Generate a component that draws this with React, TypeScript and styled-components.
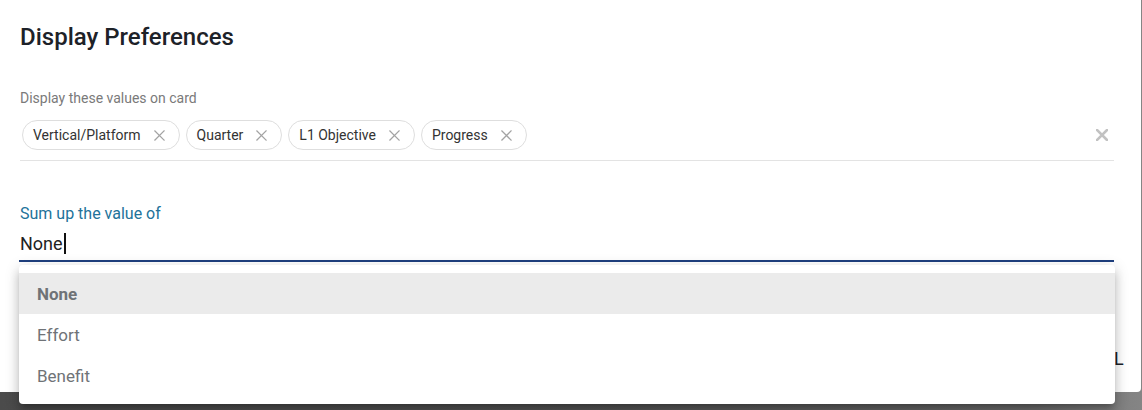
import React from 'react'
import styled, { createGlobalStyle } from 'styled-components'

const GlobalStyle = createGlobalStyle`
  html, body {
    margin: 0;
    padding: 0;
  }
  body {
    width: 1142px;
    height: 410px;
    overflow: hidden;
    background: linear-gradient(90deg, #4b4b4b 0%, #575757 55%, #6c6c6c 90%, #858585 100%);
    font-family: Roboto, "Noto Sans", "Liberation Sans", sans-serif;
  }
`

const Dialog = styled.div`
  position: relative;
  width: 1141px;
  height: 392px;
  background: #fff;
  border-bottom-right-radius: 4px;
  box-sizing: border-box;
  padding: 22px 20px 0 20px;
  display: flex;
  flex-direction: column;
`

const Title = styled.h2`
  margin: 0;
  font-size: 24px;
  font-weight: 500;
  line-height: 30px;
  color: #1d2228;
`

const Field = styled.div<{ $top: number }>`
  position: relative;
  margin-top: ${p => p.$top}px;
  margin-right: 7px;
`

const Label = styled.div<{ $focused?: boolean }>`
  font-size: ${p => (p.$focused ? 16 : 14)}px;
  line-height: ${p => (p.$focused ? 19 : 16)}px;
  color: ${p => (p.$focused ? '#22729a' : '#7a7a7a')};
`

const ChipRow = styled.div`
  display: flex;
  align-items: center;
  gap: 6px;
  padding: 14px 0 10px 2px;
  border-bottom: 1px solid #e3e3e3;
`

const Chip = styled.div`
  display: inline-flex;
  align-items: center;
  gap: 13px;
  height: 30px;
  box-sizing: border-box;
  padding: 0 14px 0 10px;
  border: 1px solid #dedede;
  border-radius: 16px;
  font-size: 14px;
  color: #333;
`

const ClearAll = styled.div`
  margin-left: auto;
  margin-right: 6px;
  display: flex;
  align-items: center;
`

const Input = styled.div`
  display: flex;
  align-items: center;
  height: 33px;
  padding-top: 4px;
  font-size: 18px;
  color: #222;
  border-bottom: 2px solid #1e3f7e;
  margin-left: -1px;
  padding-left: 1px;
`

const Caret = styled.span`
  display: inline-block;
  width: 2px;
  height: 21px;
  background: #111;
  margin-left: 1px;
`

const Menu = styled.ul`
  position: absolute;
  left: -1px;
  right: -1px;
  top: 61px;
  margin: 0;
  padding: 8px 0;
  list-style: none;
  background: #fff;
  border-radius: 4px;
  box-shadow: 0 5px 5px -3px rgba(0, 0, 0, 0.2), 0 8px 10px 1px rgba(0, 0, 0, 0.14),
    0 3px 14px 2px rgba(0, 0, 0, 0.12);
  z-index: 10;
`

const MenuItem = styled.li<{ $active?: boolean }>`
  height: 41px;
  display: flex;
  align-items: center;
  padding-left: 18px;
  font-size: 17px;
  color: #6f7377;
  font-weight: ${p => (p.$active ? 700 : 400)};
  background: ${p => (p.$active ? '#ebebeb' : 'transparent')};
`

const Footer = styled.div`
  margin-top: auto;
  margin-right: -3px;
  display: flex;
  justify-content: flex-end;
  gap: 8px;
  padding-bottom: 17px;
`

const TextButton = styled.button`
  border: none;
  background: none;
  padding: 6px 0;
  font-family: inherit;
  font-size: 18px;
  font-weight: 400;
  letter-spacing: 0.4px;
  color: #1d2228;
`

const SmallX = ({ size = 11, color = '#a3a3a3', width = 1.4 }) => (
  <svg width={size} height={size} viewBox="0 0 12 12">
    <path d="M1 1 L11 11 M11 1 L1 11" stroke={color} strokeWidth={width} strokeLinecap="square" />
  </svg>
)

const values = ['Vertical/Platform', 'Quarter', 'L1 Objective', 'Progress']
const options = ['None', 'Effort', 'Benefit']

export default function App() {
  return (
    <>
      <GlobalStyle />
      <Dialog>
        <Title>Display Preferences</Title>

        <Field $top={38}>
          <Label>Display these values on card</Label>
          <ChipRow>
            {values.map(v => (
              <Chip key={v}>
                {v}
                <SmallX />
              </Chip>
            ))}
            <ClearAll>
              <SmallX size={12} color="#c2c2c2" width={2.6} />
            </ClearAll>
          </ChipRow>
        </Field>

        <Field $top={43}>
          <Label $focused>Sum up the value of</Label>
          <Input>
            None
            <Caret />
          </Input>
          <Menu>
            {options.map((o, i) => (
              <MenuItem key={o} $active={i === 0}>
                {o}
              </MenuItem>
            ))}
          </Menu>
        </Field>

        <Footer>
          <TextButton>SAVE</TextButton>
          <TextButton>CANCEL</TextButton>
        </Footer>
      </Dialog>
    </>
  )
}
